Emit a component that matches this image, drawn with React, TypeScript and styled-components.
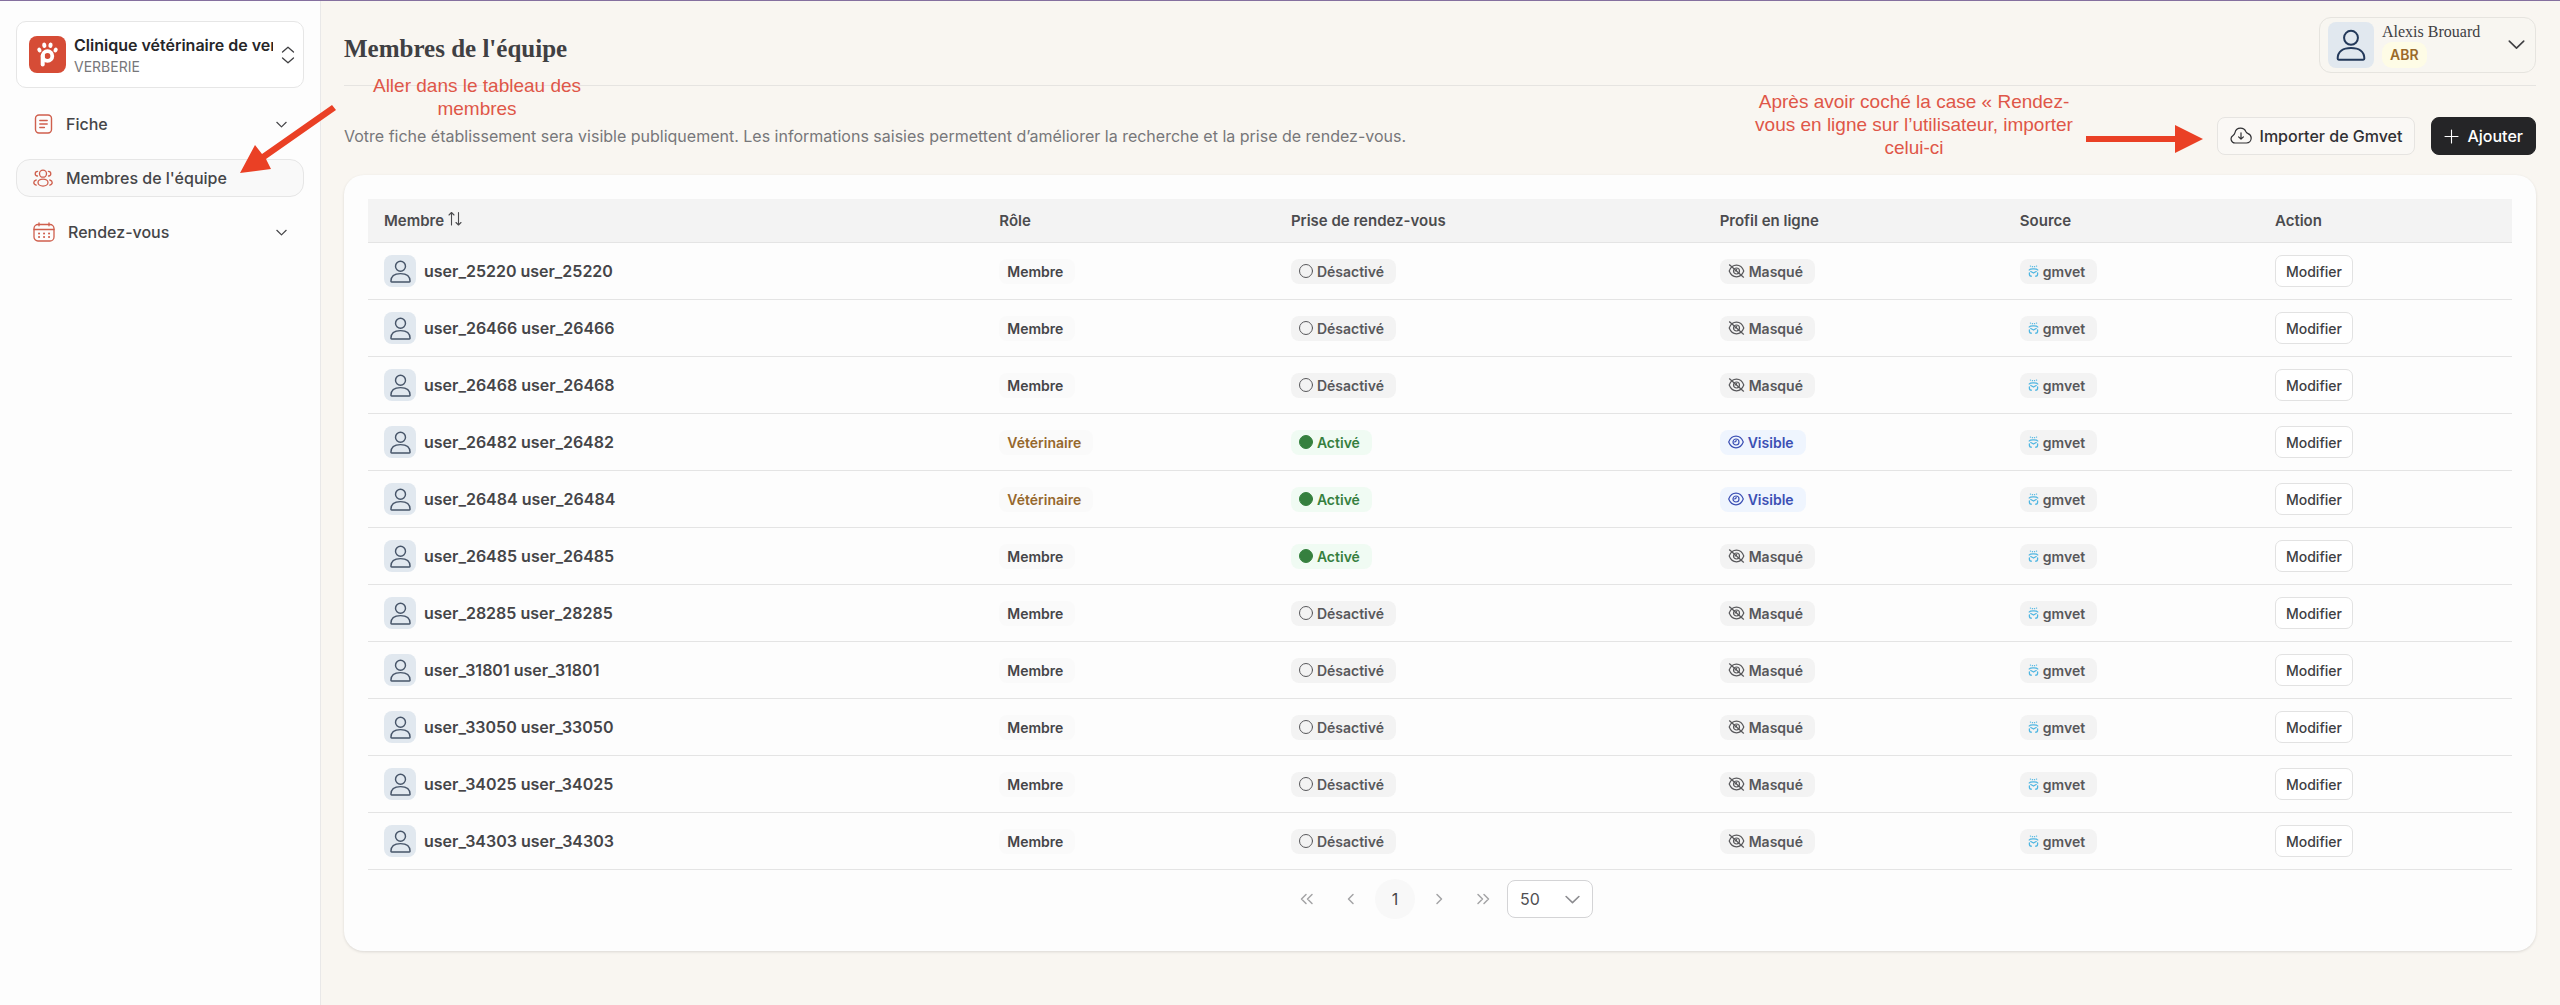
import React from "react";
import styled, { createGlobalStyle, css } from "styled-components";

const sans = `Inter, "Liberation Sans", sans-serif`;
const serif = `"Liberation Serif", "Times New Roman", serif`;

const GlobalStyle = createGlobalStyle`
  *, *::before, *::after { box-sizing: border-box; }
  body { margin: 0; background: #f9f6f1; color: #404043; font-family: ${sans}; font-size: 16px; }
  button, select { font-family: inherit; color: inherit; margin: 0; cursor: pointer; }
  h1, p, ul { margin: 0; padding: 0; }
`;

/* ---------- layout ---------- */

const Shell = styled.div`
  position: relative;
  display: flex;
  min-height: 100vh;
  border-top: 1px solid #85709f;
`;

const Sidebar = styled.aside`
  flex: none;
  width: 321px;
  padding: 20px 16px;
  background: #fdfdfd;
  border-right: 1px solid #e9e8e8;
`;

const Main = styled.main`
  flex: 1;
  min-width: 0;
  padding: 16px 24px 24px 23px;
`;

/* ---------- sidebar ---------- */

const ClinicSwitcher = styled.button`
  display: flex;
  align-items: center;
  width: 100%;
  height: 67px;
  padding: 0 8px 0 12px;
  background: #fff;
  border: 1px solid #e6e6e6;
  border-radius: 10px;
  text-align: left;
`;

const ClinicText = styled.span`
  flex: 1;
  min-width: 0;
  margin: 0 8px;
  display: flex;
  flex-direction: column;
`;

const ClinicName = styled.span`
  overflow: hidden;
  white-space: nowrap;
  font-size: 16px;
  font-weight: 600;
  line-height: 24px;
  color: #262629;
`;

const ClinicCity = styled.span`
  font-size: 14px;
  line-height: 20px;
  color: #77777a;
`;

const NavList = styled.ul`
  list-style: none;
  display: flex;
  flex-direction: column;
  gap: 16px;
  margin-top: 17px;
`;

const navItem = css`
  display: flex;
  align-items: center;
  gap: 13px;
  width: 100%;
  height: 38px;
  padding: 0 16px;
  border: 1px solid transparent;
  border-radius: 14px;
  background: transparent;
  font-size: 16px;
  font-weight: 500;
  text-align: left;
  text-decoration: none;
  color: #454548;
`;

const NavButton = styled.button`
  ${navItem}
`;

const NavLink = styled.a`
  ${navItem}
  background: #f9f9f9;
  border-color: #e6e6e6;
`;

const NavLabel = styled.span`
  flex: 1;
`;

/* ---------- header ---------- */

const Header = styled.header`
  display: flex;
  align-items: center;
  justify-content: space-between;
  height: 69px;
  padding-bottom: 13px;
  border-bottom: 1px solid #e6e4e1;
`;

const Title = styled.h1`
  margin-top: 8px;
  font-family: ${serif};
  font-size: 25px;
  font-weight: 700;
  line-height: 32px;
  color: #404043;
`;

const UserMenu = styled.button`
  display: flex;
  align-items: center;
  width: 217px;
  height: 56px;
  padding: 0 10px 0 8px;
  border: 1px solid #e6e4df;
  border-radius: 12px;
  background: #f8f6f1;
  text-align: left;
`;

const UserText = styled.span`
  flex: 1;
  display: flex;
  flex-direction: column;
  align-items: flex-start;
  margin-left: 8px;
`;

const UserName = styled.span`
  font-family: ${serif};
  font-size: 16px;
  line-height: 20px;
  color: #404043;
`;

const Initials = styled.span`
  padding: 0 8px;
  border-radius: 10px;
  background: #fefce6;
  font-size: 14px;
  font-weight: 600;
  line-height: 26px;
  color: #9a6a2a;
`;

const Avatar = styled.span<{ $large?: boolean }>`
  display: inline-flex;
  align-items: center;
  justify-content: center;
  flex: none;
  width: ${(p) => (p.$large ? 46 : 32)}px;
  height: ${(p) => (p.$large ? 46 : 32)}px;
  border-radius: 8px;
  background: #e1e8ef;
  color: ${(p) => (p.$large ? "#23395a" : "#475569")};
`;

const Toolbar = styled.div`
  display: flex;
  align-items: center;
  gap: 16px;
  margin-top: 31px;
`;

const Intro = styled.p`
  flex: 1;
  font-size: 16px;
  line-height: 24px;
  color: #77777a;
`;

const ActionButton = styled.button<{ $dark?: boolean }>`
  display: flex;
  align-items: center;
  gap: 8px;
  height: 38px;
  padding: 0 12px;
  border: 1px solid ${(p) => (p.$dark ? "#252527" : "#e6e4e1")};
  border-radius: 8px;
  background: ${(p) => (p.$dark ? "#252527" : "#faf8f5")};
  font-size: 16px;
  font-weight: 500;
  color: ${(p) => (p.$dark ? "#fff" : "#303033")};
`;

/* ---------- table ---------- */

const Card = styled.section`
  margin-top: 20px;
  padding: 24px 24px 32px;
  border-radius: 20px;
  background: #fdfdfd;
  box-shadow: 0 1px 3px rgba(0, 0, 0, 0.12);
`;

const Table = styled.table`
  width: 100%;
  table-layout: fixed;
  border-collapse: separate;
  border-spacing: 0;
`;

const Col = styled.col<{ $share: number }>`
  width: ${(p) => p.$share}%;
`;

const Th = styled.th`
  height: 44px;
  padding: 0 16px;
  background: #f3f3f3;
  border-bottom: 1px solid #e4e4e4;
  font-size: 15px;
  font-weight: 600;
  text-align: left;
  white-space: nowrap;
  color: #4b4b4e;

  svg { margin-left: 4px; vertical-align: -1px; }
`;

const Td = styled.td`
  height: 57px;
  padding: 0 16px;
  border-bottom: 1px solid #e4e4e4;
`;

const Member = styled.div`
  display: flex;
  align-items: center;
  gap: 8px;
  font-size: 16px;
  font-weight: 600;
  color: #454548;
`;

type Tone = "plain" | "vet" | "muted" | "green" | "blue";

const tones: Record<Tone, [string, string]> = {
  plain: ["#fafafa", "#454548"],
  vet: ["#fafafa", "#96682d"],
  muted: ["#f3f3f3", "#58585b"],
  green: ["#f0fbf3", "#36803f"],
  blue: ["#eff5fe", "#3c50b4"],
};

const Tag = styled.span<{ $tone: Tone }>`
  display: inline-flex;
  align-items: center;
  gap: 4px;
  height: 25px;
  padding: 0 12px 0 8px;
  border-radius: 8px;
  vertical-align: middle;
  background: ${(p) => tones[p.$tone][0]};
  color: ${(p) => tones[p.$tone][1]};
  font-size: 14px;
  font-weight: 600;
`;

const EditButton = styled.button`
  height: 32px;
  padding: 0 10px;
  border: 1px solid #e2e2e2;
  border-radius: 7px;
  background: #fff;
  font-size: 14px;
  font-weight: 500;
  vertical-align: middle;
`;

const Pager = styled.nav`
  display: flex;
  align-items: center;
  justify-content: center;
  gap: 4px;
  padding-top: 9px;
`;

const PageButton = styled.button<{ $current?: boolean }>`
  display: flex;
  align-items: center;
  justify-content: center;
  width: 40px;
  height: 40px;
  padding: 0;
  border: 0;
  border-radius: 50%;
  background: ${(p) => (p.$current ? "#f8f8f8" : "transparent")};
  font-size: 16px;
  color: ${(p) => (p.$current ? "#454548" : "#a4a4a6")};
`;

const SizeField = styled.label`
  display: grid;
  align-items: center;
  width: 86px;

  > * { grid-area: 1 / 1; }
  svg { justify-self: end; margin-right: 13px; color: #8c8c90; pointer-events: none; }
`;

const SizeSelect = styled.select`
  appearance: none;
  width: 100%;
  height: 38px;
  padding: 0 12px;
  border: 1px solid #d4d4d6;
  border-radius: 8px;
  background: #fff;
  font-size: 16px;
  color: #505053;
`;

/* ---------- annotations laid over the page ---------- */

const Note = styled.p<{ $left: number; $top: number; $width: number }>`
  position: absolute;
  left: ${(p) => p.$left}px;
  top: ${(p) => p.$top}px;
  width: ${(p) => p.$width}px;
  font-family: "Liberation Sans", Arial, sans-serif;
  font-size: 19px;
  line-height: 23px;
  text-align: center;
  color: #df5648;
`;

const Arrow = styled.svg<{ $left: number; $top: number }>`
  position: absolute;
  left: ${(p) => p.$left}px;
  top: ${(p) => p.$top}px;
  fill: #ea4025;
  pointer-events: none;
`;

/* ---------- icons ---------- */

const Glyph = styled.svg`
  display: block;
  flex: none;
  fill: none;
  stroke: currentColor;
  stroke-linecap: round;
  stroke-linejoin: round;
`;

const NavGlyph = styled(Glyph)`
  color: #cf5f4d;
`;

const InlineGlyph = styled(Glyph)`
  display: inline;
`;

const Chevron = ({ width, weight = 1.4 }: { width: number; weight?: number }) => (
  <Glyph width={width} height={width} viewBox="0 0 16 16" strokeWidth={(weight * 16) / width}>
    <path d="M1.2 4.8 8 11.4l6.8-6.6" />
  </Glyph>
);

const PersonIcon = ({ size }: { size: number }) => (
  <Glyph width={size} height={size} viewBox="0 0 24 24" strokeWidth="1.5">
    <circle cx="12" cy="6.6" r="5.2" />
    <path d="M2 22.2c0-5.4 4.2-8 10-8s10 2.6 10 8c0 .5-.3.8-.8.8H2.8c-.5 0-.8-.3-.8-.8Z" />
  </Glyph>
);

const Logo = () => (
  <Glyph width="37" height="37" viewBox="0 0 37 37">
    <rect width="37" height="37" rx="8" fill="#d64c36" stroke="none" />
    <g fill="#fff" stroke="none">
      <ellipse cx="10.4" cy="14" rx="2" ry="2.5" transform="rotate(-25 10.4 14)" />
      <ellipse cx="15.3" cy="9.2" rx="2.1" ry="2.8" transform="rotate(-8 15.3 9.2)" />
      <ellipse cx="21.5" cy="9.2" rx="2.1" ry="2.8" transform="rotate(8 21.5 9.2)" />
      <ellipse cx="26.6" cy="14" rx="2" ry="2.5" transform="rotate(25 26.6 14)" />
    </g>
    <circle cx="18.5" cy="20" r="4.8" stroke="#fff" strokeWidth="3.8" />
    <path d="M13.7 19.5v9" stroke="#fff" strokeWidth="4" />
  </Glyph>
);

const UpDownIcon = () => (
  <Glyph width="14" height="18" viewBox="0 0 14 18" strokeWidth="1.3">
    <path d="M1.5 6 7 1.2 12.5 6M1.5 12 7 16.8 12.5 12" />
  </Glyph>
);

const SheetIcon = () => (
  <NavGlyph width="20" height="20" viewBox="0 0 20 20" strokeWidth="1.4">
    <rect x="2.5" y="1" width="16" height="18" rx="3.5" />
    <path d="M6.8 6.5h7.4M6.8 10h7.4M6.8 13.5h4.6" />
  </NavGlyph>
);

const TeamIcon = () => (
  <NavGlyph width="20" height="18" viewBox="0 0 20 18" strokeWidth="1.3">
    <circle cx="10" cy="4.7" r="3.5" />
    <ellipse cx="10" cy="13.6" rx="5" ry="3.5" />
    <path d="M4.6 2.3C3 2.4 2.2 3.4 2.2 4.7S3 6.9 4.5 7M15.4 2.3c1.6.1 2.4 1.1 2.4 2.4S17 6.9 15.5 7M3.2 11C1.7 11.4.8 12.3.8 13.5s.8 2.2 2.4 2.6M16.8 11c1.5.4 2.4 1.3 2.4 2.5s-.8 2.2-2.4 2.6" />
  </NavGlyph>
);

const CalendarIcon = () => (
  <NavGlyph width="22" height="20" viewBox="0 0 22 20" strokeWidth="1.3">
    <rect x="1" y="2.5" width="20" height="16.5" rx="4" />
    <path d="M1 7.5h20M6 .8v3M16 .8v3" />
    <path d="M6 11.5h.1M11 11.5h.1M16 11.5h.1M6 15h.1M11 15h.1M16 15h.1" strokeWidth="2" />
  </NavGlyph>
);

const CloudIcon = () => (
  <Glyph width="22" height="18" viewBox="0 0 22 18" strokeWidth="1.2">
    <path d="M5 16a4 4 0 0 1-2.3-7.2c1-.8 1.8-1.4 2.2-3C5.6 3 7.7 1.2 10.5 1.2c2.4 0 4.4 1.2 5.3 3.3.6 1.3 1.1 1.6 2.3 2.1 1.9.8 3.1 2.4 3.1 4.5 0 2.8-2 4.9-4.8 4.9Z" />
    <path d="M11 5.800v6.200M8.600 9.800 11 12.200l2.400-2.400" />
  </Glyph>
);

const PlusIcon = () => (
  <Glyph width="15" height="15" viewBox="0 0 15 15" strokeWidth="1.1">
    <path d="M7.5 1v13M1 7.5h13" />
  </Glyph>
);

const SortIcon = () => (
  <InlineGlyph width="14" height="16" viewBox="0 0 14 16" strokeWidth="1.1">
    <path d="M3.5 14V1.500M1 4l2.500-2.500L6 4M10.500 1.500V14M8 11.500l2.500 2.500 2.500-2.500" />
  </InlineGlyph>
);

const StatusDot = ({ filled }: { filled: boolean }) => (
  <Glyph width="14" height="14" viewBox="0 0 14 14" strokeWidth="1">
    <circle cx="7" cy="7" r="6.5" fill={filled ? "currentColor" : "none"} />
  </Glyph>
);

const EyeIcon = ({ hidden }: { hidden: boolean }) => (
  <Glyph width={hidden ? 17 : 16} height="14" viewBox="0 0 16 14" strokeWidth="1.2">
    <path d="M.7 7C2.2 3.2 4.9 1.2 8 1.2s5.8 2 7.3 5.8c-1.5 3.8-4.2 5.8-7.3 5.8S2.2 10.8.7 7Z" />
    <circle cx="8" cy="7" r="3" />
    <path d="M8.2 5.4c-.1.9-.6 1.4-1.5 1.5" />
    {hidden && <path d="m1 .8 14 12.4" />}
  </Glyph>
);

const GmvetIcon = () => (
  <Glyph width="11" height="12" viewBox="0 0 11 12" strokeWidth="1.3" color="#4fb6e2">
    <path d="M2.4 1.100h.1M8.500 1.100h.1M4.400 1.700h.1M6.500 1.700h.1" />
    <path d="M1.2 5C2 3.800 3.500 3.900 5.500 3.900S9 3.800 9.800 5" />
    <path d="M2.800 6.500 5.500 8l2.700-1.500" />
    <path d="M1.4 7.800v1.500c0 1.200.8 1.900 2 1.900M9.600 7.800v1.500c0 1.200-.8 1.900-2 1.900" />
  </Glyph>
);

const PagerIcon = ({ d }: { d: string }) => (
  <Glyph width="14" height="14" viewBox="0 0 14 14" strokeWidth="1.5">
    <path d={d} />
  </Glyph>
);

/* ---------- data ---------- */

type Row = { id: string; vet?: boolean; active?: boolean; visible?: boolean };

const rows: Row[] = [
  { id: "25220" },
  { id: "26466" },
  { id: "26468" },
  { id: "26482", vet: true, active: true, visible: true },
  { id: "26484", vet: true, active: true, visible: true },
  { id: "26485", active: true },
  { id: "28285" },
  { id: "31801" },
  { id: "33050" },
  { id: "34025" },
  { id: "34303" },
];

const columns = [28.7, 13.6, 20, 14, 11.9, 11.8];

const MemberRow = ({ id, vet = false, active = false, visible = false }: Row) => (
  <tr>
    <Td>
      <Member>
        <Avatar><PersonIcon size={23} /></Avatar>
        {`user_${id} user_${id}`}
      </Member>
    </Td>
    <Td><Tag $tone={vet ? "vet" : "plain"}>{vet ? "Vétérinaire" : "Membre"}</Tag></Td>
    <Td>
      <Tag $tone={active ? "green" : "muted"}>
        <StatusDot filled={active} />
        {active ? "Activé" : "Désactivé"}
      </Tag>
    </Td>
    <Td>
      <Tag $tone={visible ? "blue" : "muted"}>
        <EyeIcon hidden={!visible} />
        {visible ? "Visible" : "Masqué"}
      </Tag>
    </Td>
    <Td><Tag $tone="muted"><GmvetIcon />gmvet</Tag></Td>
    <Td><EditButton type="button">Modifier</EditButton></Td>
  </tr>
);

export default function App() {
  return (
    <>
      <GlobalStyle />
      <Shell>
        <Sidebar>
          <ClinicSwitcher type="button">
            <Logo />
            <ClinicText>
              <ClinicName>Clinique vétérinaire de verberie</ClinicName>
              <ClinicCity>VERBERIE</ClinicCity>
            </ClinicText>
            <UpDownIcon />
          </ClinicSwitcher>
          <nav>
            <NavList>
              <li><NavButton type="button"><SheetIcon /><NavLabel>Fiche</NavLabel><Chevron width={11} weight={1.2} /></NavButton></li>
              <li><NavLink href="#membres"><TeamIcon /><NavLabel>Membres de l'équipe</NavLabel></NavLink></li>
              <li><NavButton type="button"><CalendarIcon /><NavLabel>Rendez-vous</NavLabel><Chevron width={11} weight={1.2} /></NavButton></li>
            </NavList>
          </nav>
        </Sidebar>

        <Main>
          <Header>
            <Title>Membres de l'équipe</Title>
            <UserMenu type="button">
              <Avatar $large><PersonIcon size={32} /></Avatar>
              <UserText>
                <UserName>Alexis Brouard</UserName>
                <Initials>ABR</Initials>
              </UserText>
              <Chevron width={17} weight={1.6} />
            </UserMenu>
          </Header>

          <Toolbar>
            <Intro>
              Votre fiche établissement sera visible publiquement. Les informations saisies permettent d’améliorer la recherche et la prise de rendez-vous.
            </Intro>
            <ActionButton type="button"><CloudIcon />Importer de Gmvet</ActionButton>
            <ActionButton type="button" $dark><PlusIcon />Ajouter</ActionButton>
          </Toolbar>

          <Card>
            <Table>
              <colgroup>{columns.map((share, i) => <Col key={i} $share={share} />)}</colgroup>
              <thead>
                <tr>
                  <Th scope="col">Membre<SortIcon /></Th>
                  <Th scope="col">Rôle</Th>
                  <Th scope="col">Prise de rendez-vous</Th>
                  <Th scope="col">Profil en ligne</Th>
                  <Th scope="col">Source</Th>
                  <Th scope="col">Action</Th>
                </tr>
              </thead>
              <tbody>{rows.map((row) => <MemberRow key={row.id} {...row} />)}</tbody>
            </Table>
            <Pager aria-label="Pagination">
              <PageButton type="button" aria-label="Première page"><PagerIcon d="M6 2.5 1.5 7 6 11.5M12 2.5 7.5 7l4.5 4.5" /></PageButton>
              <PageButton type="button" aria-label="Page précédente"><PagerIcon d="M9 2.5 4.5 7 9 11.5" /></PageButton>
              <PageButton type="button" $current>1</PageButton>
              <PageButton type="button" aria-label="Page suivante"><PagerIcon d="M5 2.5 9.5 7 5 11.5" /></PageButton>
              <PageButton type="button" aria-label="Dernière page"><PagerIcon d="M2 2.5 6.5 7 2 11.5M8 2.5 12.5 7 8 11.5" /></PageButton>
              <SizeField>
                <SizeSelect aria-label="Lignes par page" defaultValue="50">
                  <option>50</option>
                </SizeSelect>
                <Chevron width={15} weight={1.6} />
              </SizeField>
            </Pager>
          </Card>
        </Main>

        <Note $left={364} $top={73} $width={226}>Aller dans le tableau des membres</Note>
        <Note $left={1749} $top={89} $width={330}>Après avoir coché la case « Rendez-vous en ligne sur l’utilisateur, importer celui-ci</Note>
        <Arrow $left={238} $top={102} width="100" height="74" viewBox="0 0 100 74">
          <path d="M94 2 98 7 28 56 33 66 2 70 17 42 24 51Z" />
        </Arrow>
        <Arrow $left={2086} $top={124} width="118" height="28" viewBox="0 0 118 28">
          <path d="M0 11h89V0l28 14-28 14V17H0Z" />
        </Arrow>
      </Shell>
    </>
  );
}
